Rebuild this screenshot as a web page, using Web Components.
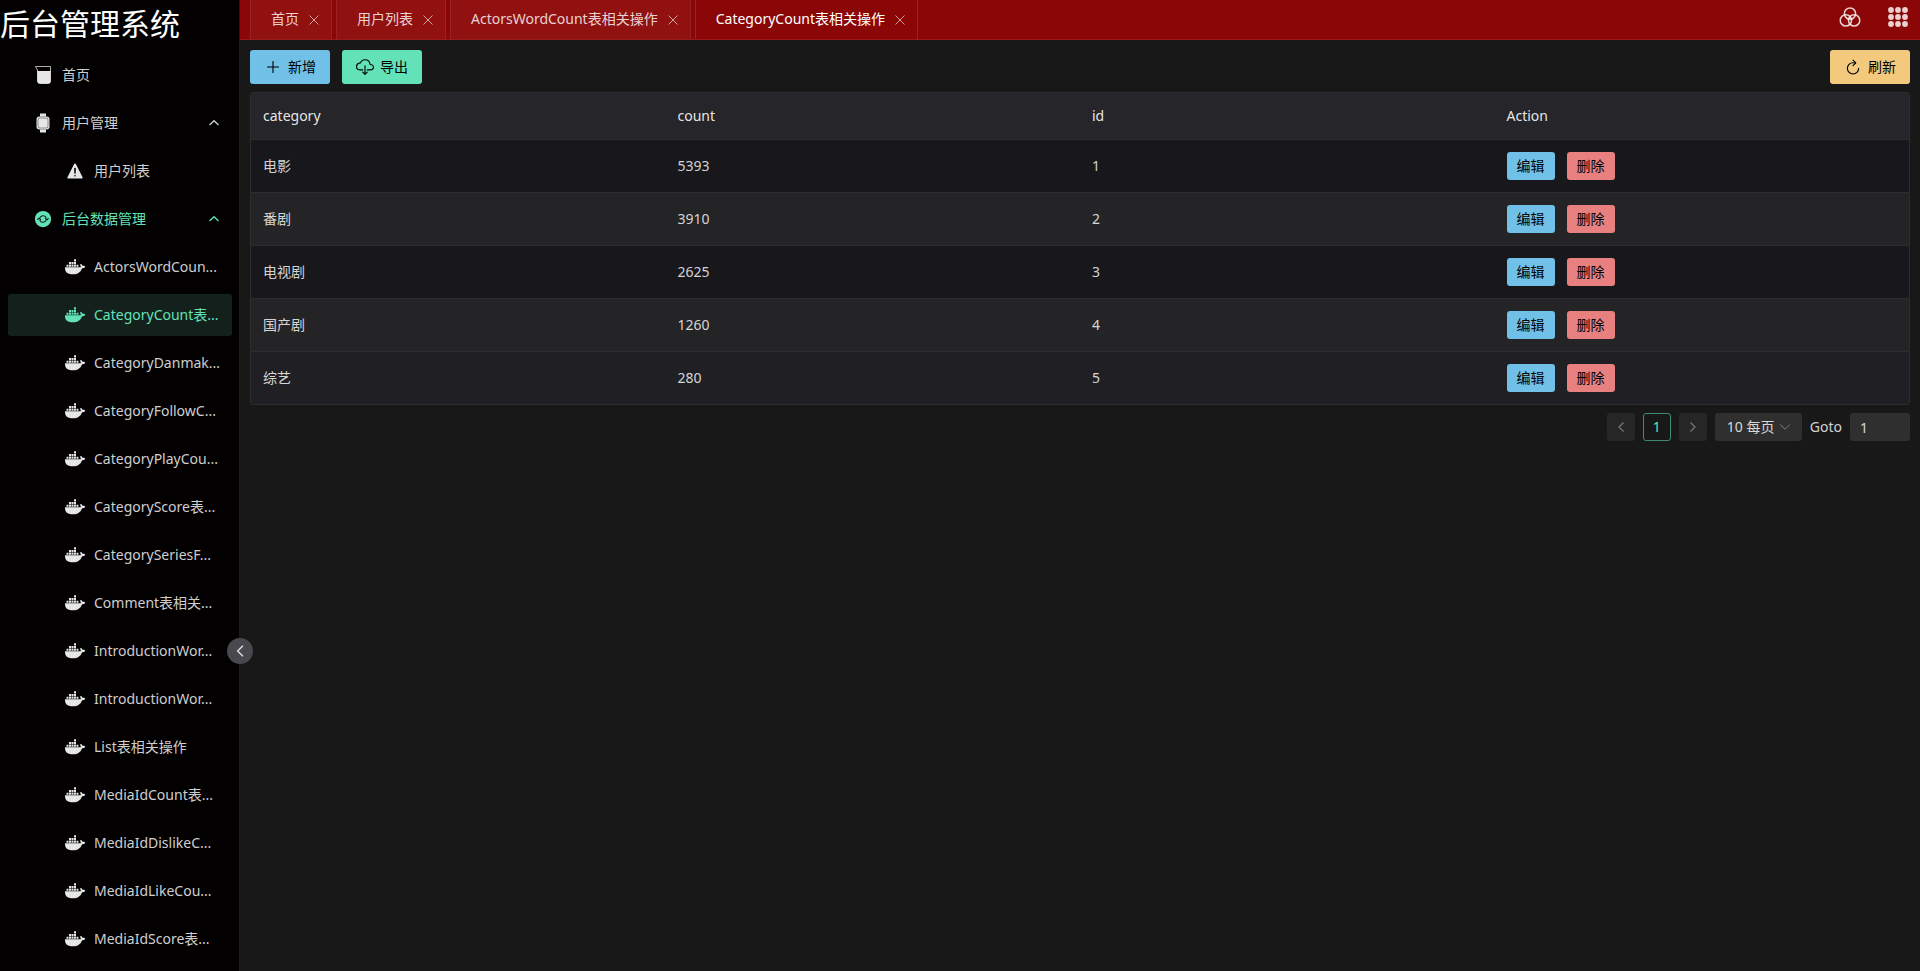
<!DOCTYPE html>
<html lang="zh-CN">
<head>
<meta charset="UTF-8">
<meta name="viewport" content="width=device-width, initial-scale=1.0">
<title>后台管理系统</title>
<style>
  html, body {
    height: 100%;
    margin: 0;
  }

  body {
    overflow: hidden;
    color: rgba(255, 255, 255, 0.82);
    background: #181818;
    font: 14px/22px "Noto Sans", "Noto Sans CJK SC", sans-serif;

    --primary: #63e2b7;
    --info: #70c0e8;
    --warning: #f2c97d;
    --error: #e88080;
    --line: #2d2d30;
  }
</style>
</head>
<body>
<admin-layout>
  <side-menu slot="sider" heading="后台管理系统"></side-menu>
  <tab-bar slot="header">
    <tab-item>首页</tab-item>
    <tab-item>用户列表</tab-item>
    <tab-item>ActorsWordCount表相关操作</tab-item>
    <tab-item active>CategoryCount表相关操作</tab-item>
  </tab-bar>
  <tool-bar>
    <tool-button icon="add" type="info">新增</tool-button>
    <tool-button icon="download" type="primary">导出</tool-button>
    <tool-button slot="end" icon="refresh" type="warning">刷新</tool-button>
  </tool-bar>
  <data-table></data-table>
  <page-bar></page-bar>
</admin-layout>

<script>
const ICONS = {
  beaker: ['0 0 20 20', '<path d="M2.500 1.500h15v14.500a2.500 2.500 0 0 1-2.500 2.500H7A2.500 2.500 0 0 1 4.500 16V5z" fill="none" stroke="currentColor" stroke-opacity=".75" stroke-linejoin="round"/><path d="M4.500 6h13v10a2.500 2.500 0 0 1-2.500 2.500H7A2.500 2.500 0 0 1 4.500 16z"/>'],
  watch: ['0 0 20 20', '<path d="M7 .5h6v3H7zM7 16.500h6v3H7z"/><rect x="3.500" y="3.500" width="13" height="13" rx="3"/><rect x="5" y="5" width="10" height="10" rx="2" fill="none" stroke="#000" stroke-opacity=".5" stroke-width=".8"/>'],
  warning: ['0 0 512 512', '<path fill-rule="evenodd" d="M449 413L279 75a26 26 0 0 0-46 0L63 413a26 26 0 0 0 23 38h340a26 26 0 0 0 23-38zM256 398a20 20 0 1 1 0-40 20 20 0 0 1 0 40zm22-202l-6 132h-32l-6-132a22 22 0 0 1 44 0z"/>'],
  sync: ['0 0 512 512', '<circle cx="256" cy="256" r="208"/><g fill="none" stroke="#06110e" stroke-width="30" stroke-linecap="round" stroke-linejoin="round"><path d="M183 212c16-24 41-40 77-40 32 0 58 16 75 46M329 300c-16 24-41 40-77 40-32 0-58-16-75-46"/><path d="M122 266l35-34 36 34M319 246l36 34 35-34"/></g>'],
  docker: ['195 51 60 60', '<path d="M222 57.500h6v7h-6zM207 66h6v6.500h-6zM214.500 66h6v6.500h-6zM222 66h6v6.500h-6zM199.500 74.500h6v6h-6zM207 74.500h6v6h-6zM214.500 74.500h6v6h-6zM222 74.500h6v6h-6zM229.500 74.500h6v6h-6z"/><path d="M195 82h43c3 0 4-1 5-2-3-3-3-6-1-9 4 2 5 4 6 7 3-1 6 0 8 1-2 4-5 6-10 6-4 12-13 18-27 18-16 0-25-7-24-21z"/>'],
  add: ['0 0 512 512', '<path fill="none" stroke="currentColor" stroke-width="32" stroke-linecap="round" d="M256 100v312M412 256H100"/>'],
  download: ['0 0 512 512', '<g fill="none" stroke="currentColor" stroke-width="32" stroke-linecap="round" stroke-linejoin="round"><path d="M320 336h76c55 0 100-21 100-75.600s-53-73.500-96-75.600C391 99.700 330 48 256 48c-69 0-113.400 45.800-128 91.200-60 5.700-112 43.900-112 106.400S70 336 136 336h56"/><path d="M192 400l64 64 64-64M256 224v224"/></g>'],
  refresh: ['0 0 512 512', '<g fill="none" stroke="currentColor" stroke-linecap="round"><path stroke-width="32" d="M320 146s24-12-64-12a160 160 0 1 0 160 160"/><path stroke-width="32" stroke-linejoin="round" d="M256 58l80 80-80 80"/></g>'],
  filter: ['0 0 512 512', '<g fill="none" stroke="currentColor" stroke-width="32"><circle cx="256" cy="184" r="120"/><circle cx="344" cy="328" r="120"/><circle cx="168" cy="328" r="120"/></g>'],
  apps: ['0 0 24 24', [5, 12, 19].map((y) => [5, 12, 19].map((x) => `<circle cx="${x}" cy="${y}" r="2.900"/>`).join('')).join('')],
  close: ['0 0 12 12', '<path fill="none" stroke="currentColor" d="M1.500 1.500l9 9M10.500 1.500l-9 9"/>'],
  up: ['0 0 12 12', '<path fill="none" stroke="currentColor" stroke-width="1.300" d="M1.500 8L6 3.700 10.500 8"/>'],
  down: ['0 0 12 12', '<path fill="none" stroke="currentColor" d="M1.200 3.500L6 8.300l4.800-4.800"/>'],
  left: ['0 0 12 12', '<path fill="none" stroke="currentColor" stroke-width="1.200" d="M8.500 1.500L4 6l4.500 4.500"/>'],
  right: ['0 0 12 12', '<path fill="none" stroke="currentColor" stroke-width="1.200" d="M3.500 1.500L8 6l-4.500 4.500"/>'],
}

const MENU = [
  { text: '首页', icon: 'beaker' },
  { text: '用户管理', icon: 'watch', group: true },
  { text: '用户列表', icon: 'warning', child: true },
  { text: '后台数据管理', icon: 'sync', group: true, open: true },
  ...[
    'ActorsWordCoun...',
    'CategoryCount表...',
    'CategoryDanmak...',
    'CategoryFollowC...',
    'CategoryPlayCou...',
    'CategoryScore表...',
    'CategorySeriesF...',
    'Comment表相关...',
    'IntroductionWor...',
    'IntroductionWor...',
    'List表相关操作',
    'MediaIdCount表...',
    'MediaIdDislikeC...',
    'MediaIdLikeCou...',
    'MediaIdScore表...',
  ].map((text, i) => ({ text, icon: 'docker', child: true, active: i === 1 })),
]

const ROWS = [
  ['电影', 5393, 1],
  ['番剧', 3910, 2],
  ['电视剧', 2625, 3],
  ['国产剧', 1260, 4],
  ['综艺', 280, 5],
]

class BaseElement extends HTMLElement {
  constructor() {
    super()
    this.attachShadow({ mode: 'open' })
  }

  connectedCallback() {
    this.shadowRoot.innerHTML = `
      <style>
        * { box-sizing: border-box; }
        button, input, select { font: inherit; margin: 0; }
        button { cursor: pointer; }
      </style>
      ${this.render()}
    `
  }
}

class AppIcon extends BaseElement {
  render() {
    const [viewBox, body] = ICONS[this.getAttribute('name')]
    return `
      <style>
        :host { display: inline-flex; flex: none; width: var(--size, 18px); height: var(--size, 18px); }
        svg { width: 100%; height: 100%; fill: currentColor; }
      </style>
      <svg viewBox="${viewBox}" aria-hidden="true">${body}</svg>
    `
  }
}

class AdminLayout extends BaseElement {
  render() {
    return `
      <style>
        :host { display: grid; grid-template-columns: 240px 1fr; height: 100vh; }
        aside { position: relative; min-height: 0; background: #020000; border-right: 1px solid #1c1a1a; }
        .toggle {
          position: absolute;
          top: 67%;
          right: -14px;
          display: flex;
          align-items: center;
          justify-content: center;
          width: 26px;
          height: 26px;
          padding: 0;
          color: #e0e0e0;
          background: #48484e;
          border: 0;
          border-radius: 50%;
          transform: translateY(-50%);
          --size: 14px;
        }
        section { display: flex; flex-direction: column; min-width: 0; }
        main { display: flex; flex-direction: column; gap: 8px; padding: 10px; }
      </style>
      <aside>
        <slot name="sider"></slot>
        <button class="toggle" aria-label="收起"><app-icon name="left"></app-icon></button>
      </aside>
      <section>
        <slot name="header"></slot>
        <main><slot></slot></main>
      </section>
    `
  }
}

class SideMenu extends BaseElement {
  render() {
    return `
      <style>
        :host { display: block; height: 100%; overflow: hidden; }
        h1 { margin: 0; color: #fff; font-size: 30px; font-weight: 400; line-height: 48px; }
        nav { display: flex; flex-direction: column; gap: 6px; padding: 6px 7px 6px 8px; }
      </style>
      <h1>${this.getAttribute('heading')}</h1>
      <nav>
        ${MENU.map((item) => `
          <menu-item icon="${item.icon}"
            ${item.group ? 'group' : ''} ${item.child ? 'child' : ''}
            ${item.open ? 'open' : ''} ${item.active ? 'active' : ''}>${item.text}</menu-item>
        `).join('')}
      </nav>
    `
  }
}

class MenuItem extends BaseElement {
  render() {
    return `
      <style>
        :host { display: block; }
        a {
          display: flex;
          align-items: center;
          gap: 8px;
          height: 42px;
          padding: 0 12px 0 24px;
          color: inherit;
          white-space: nowrap;
          text-decoration: none;
          border-radius: 3px;
        }
        .icon { display: flex; justify-content: center; width: 22px; color: rgba(255, 255, 255, 0.9); --size: 20px; }
        .text { flex: 1; min-width: 0; }
        .arrow { --size: 12px; }
        :host([child]) a { padding: 0 0 0 56px; }
        :host([open]) a, :host([active]) a, :host([open]) .icon, :host([active]) .icon { color: var(--primary); }
        :host([active]) a { background: #14201b; }
      </style>
      <a href="#">
        <span class="icon"><app-icon name="${this.getAttribute('icon')}"></app-icon></span>
        <span class="text"><slot></slot></span>
        ${this.hasAttribute('group') ? '<app-icon class="arrow" name="up"></app-icon>' : ''}
      </a>
    `
  }
}

class TabBar extends BaseElement {
  render() {
    return `
      <style>
        :host {
          display: flex;
          justify-content: space-between;
          height: 40px;
          padding: 0 10px;
          box-sizing: border-box;
          background: #8b0707;
          border-bottom: 1px solid #981c1c;
        }
        .tabs { display: flex; gap: 4px; }
        .actions { display: flex; gap: 24px; padding-top: 5px; }
        .actions button { height: 24px; padding: 0; color: rgba(255, 255, 255, 0.82); background: none; border: 0; --size: 24px; }
      </style>
      <div class="tabs"><slot></slot></div>
      <div class="actions">
        <button aria-label="主题"><app-icon name="filter"></app-icon></button>
        <button aria-label="应用"><app-icon name="apps"></app-icon></button>
      </div>
    `
  }
}

class TabItem extends BaseElement {
  render() {
    return `
      <style>
        :host {
          display: flex;
          align-items: center;
          gap: 6px;
          padding: 0 8px 0 20px;
          white-space: nowrap;
          background: #911111;
          border: 1px solid #9b2222;
          border-width: 0 1px;
        }
        :host([active]) { color: #fff; background: none; }
        button { padding: 0; border: 0; background: none; }
        .name { padding-bottom: 2px; color: inherit; }
        .close { display: flex; align-items: center; justify-content: center; width: 18px; height: 18px; color: rgba(255, 255, 255, 0.6); --size: 12px; }
      </style>
      <button class="name"><slot></slot></button>
      <button class="close" aria-label="关闭"><app-icon name="close"></app-icon></button>
    `
  }
}

class ToolBar extends BaseElement {
  render() {
    return `
      <style>
        :host, div { display: flex; justify-content: space-between; gap: 12px; }
      </style>
      <div><slot></slot></div>
      <slot name="end"></slot>
    `
  }
}

class ToolButton extends BaseElement {
  render() {
    return `
      <style>
        :host { display: block; }
        button {
          display: flex;
          align-items: center;
          gap: 6px;
          height: 34px;
          padding: 0 14px;
          color: #000;
          background: var(--${this.getAttribute('type')});
          border: 0;
          border-radius: 3px;
        }
      </style>
      <button><app-icon name="${this.getAttribute('icon')}"></app-icon><slot></slot></button>
    `
  }
}

class DataTable extends BaseElement {
  render() {
    return `
      <style>
        :host { display: block; overflow: hidden; border: 1px solid var(--line); border-radius: 3px; }
        table { width: 100%; border-spacing: 0; table-layout: fixed; }
        th, td { padding: 12px; text-align: left; border-bottom: 1px solid var(--line); }
        th { color: rgba(255, 255, 255, 0.9); font-weight: 400; background: #26262a; }
        td { background: #18181c; }
        tr:nth-child(even) td { background: #242426; }
        tr:last-child td { background: #201f24; border-bottom: 0; }
        .actions { display: flex; gap: 12px; }
        button { height: 28px; padding: 0 10px; color: #000; border: 0; border-radius: 3px; }
        .edit { background: var(--info); }
        .remove { background: var(--error); }
      </style>
      <table>
        <thead>
          <tr><th>category</th><th>count</th><th>id</th><th>Action</th></tr>
        </thead>
        <tbody>
          ${ROWS.map((row) => `
            <tr>
              ${row.map((cell) => `<td>${cell}</td>`).join('')}
              <td>
                <div class="actions">
                  <button class="edit">编辑</button>
                  <button class="remove">删除</button>
                </div>
              </td>
            </tr>
          `).join('')}
        </tbody>
      </table>
    `
  }
}

class PageBar extends BaseElement {
  render() {
    return `
      <style>
        :host { display: flex; align-items: center; justify-content: flex-end; gap: 8px; }
        button, select, input { height: 28px; color: inherit; background: #2f2f2f; border: 0; border-radius: 3px; }
        button { display: flex; align-items: center; justify-content: center; width: 28px; padding: 0; --size: 12px; }
        button:disabled { color: rgba(255, 255, 255, 0.38); background: #262626; }
        .current { color: var(--primary); background: none; border: 1px solid #3f8a72; }
        .size { position: relative; display: flex; --size: 12px; }
        .size app-icon { position: absolute; top: 8px; right: 11px; color: rgba(255, 255, 255, 0.38); pointer-events: none; }
        select { appearance: none; padding: 0 27px 0 12px; }
        input { width: 60px; padding: 0 10px; }
      </style>
      <button disabled aria-label="上一页"><app-icon name="left"></app-icon></button>
      <button class="current">1</button>
      <button disabled aria-label="下一页"><app-icon name="right"></app-icon></button>
      <div class="size">
        <select aria-label="每页条数">
          <option>10 每页</option>
        </select>
        <app-icon name="down"></app-icon>
      </div>
      <label for="goto">Goto</label>
      <input id="goto" type="text" value="1">
    `
  }
}

customElements.define('app-icon', AppIcon)
customElements.define('admin-layout', AdminLayout)
customElements.define('side-menu', SideMenu)
customElements.define('menu-item', MenuItem)
customElements.define('tab-bar', TabBar)
customElements.define('tab-item', TabItem)
customElements.define('tool-bar', ToolBar)
customElements.define('tool-button', ToolButton)
customElements.define('data-table', DataTable)
customElements.define('page-bar', PageBar)
</script>
</body>
</html>
